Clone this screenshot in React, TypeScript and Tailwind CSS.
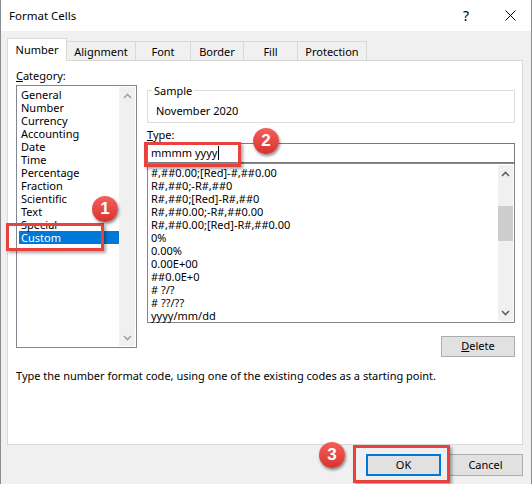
import React from 'react';

const categories = [
  'General',
  'Number',
  'Currency',
  'Accounting',
  'Date',
  'Time',
  'Percentage',
  'Fraction',
  'Scientific',
  'Text',
  'Special',
  'Custom',
];

const formats = [
  '#,##0.00;[Red]-#,##0.00',
  'R#,##0;-R#,##0',
  'R#,##0;[Red]-R#,##0',
  'R#,##0.00;-R#,##0.00',
  'R#,##0.00;[Red]-R#,##0.00',
  '0%',
  '0.00%',
  '0.00E+00',
  '##0.0E+0',
  '# ?/?',
  '# ??/??',
  'yyyy/mm/dd',
];

const tabs = [
  { label: 'Alignment', w: 'w-[69px]' },
  { label: 'Font', w: 'w-[55px]' },
  { label: 'Border', w: 'w-[53px]' },
  { label: 'Fill', w: 'w-[54px]' },
  { label: 'Protection', w: 'w-[69px]' },
];

function Chevron({ up, color }: { up?: boolean; color: string }) {
  return (
    <svg width="9" height="6" viewBox="0 0 9 6">
      <polyline
        points={up ? '1,5 4.5,1.5 8,5' : '1,1 4.5,4.5 8,1'}
        fill="none"
        stroke={color}
        strokeWidth="1.6"
      />
    </svg>
  );
}

function Badge({ n, pos }: { n: string; pos: string }) {
  return (
    <div
      className={`absolute ${pos} flex h-[26px] w-[26px] items-center justify-center rounded-full bg-gradient-to-b from-[#f3605b] to-[#d8302d] text-[17px] font-bold text-white shadow-[1px_2px_3px_rgba(0,0,0,0.45)] font-['Liberation_Sans',Arial,sans-serif]`}
    >
      {n}
    </div>
  );
}

export default function App() {
  return (
    <div className="relative h-[484px] w-[532px] overflow-hidden border-x border-[#8c8c8c] bg-[#f0f0f0] text-[11px] text-black font-['Noto_Sans',sans-serif]">
      {/* Title bar */}
      <div className="flex h-[31px] items-center bg-white pl-[8px] text-[11.5px]">
        <span className="flex-1">Format Cells</span>
        <span className="w-[14px] text-center text-[14px]">?</span>
        <svg className="ml-[32px] mr-[15px]" width="11" height="11" viewBox="0 0 11 11">
          <path d="M0.5 0.5 L10.5 10.5 M10.5 0.5 L0.5 10.5" stroke="#000" strokeWidth="1" />
        </svg>
      </div>

      <div className="pl-[6px] pt-[7px]">
        {/* Tabs */}
        <div className="flex h-[22px] items-end">
          <div className="relative z-10 -mb-px h-[23px] w-[60px] border-x border-t border-[#d9d9d9] bg-white pt-[3px] text-center">
            Number
          </div>
          {tabs.map((t) => (
            <div
              key={t.label}
              className={`h-[19px] ${t.w} border-r border-t border-[#d9d9d9] pt-[2px] text-center leading-[16px]`}
            >
              {t.label}
            </div>
          ))}
        </div>

        {/* Panel */}
        <div className="h-[385px] w-[516px] border border-[#d9d9d9] bg-white pl-[8px] pt-[7px]">
          <div className="flex gap-[10px]">
            {/* Category */}
            <div className="w-[121px]">
              <div className="h-[17px] leading-[16px]">
                <span className="underline">C</span>ategory:
              </div>
              <div className="flex h-[263px] border border-[#828790] p-px">
                <div className="flex-1 pl-px pt-[1px]">
                  {categories.map((c) => (
                    <div
                      key={c}
                      className={`h-[13px] pl-[2px] leading-[13px] ${
                        c === 'Custom' ? 'bg-[#0078d7] text-white' : ''
                      }`}
                    >
                      {c}
                    </div>
                  ))}
                </div>
                <div className="flex w-[16px] flex-col items-center justify-between bg-[#f0f0f0] pb-[5px] pt-[6px]">
                  <Chevron up color="#a3a3a3" />
                  <Chevron color="#a3a3a3" />
                </div>
              </div>
            </div>

            {/* Right side */}
            <div className="flex w-[368px] flex-col">
              <div className="relative mt-[22px] h-[33px] border border-[#dcdcdc] pl-[8px] pt-[13px] leading-[14px]">
                <span className="absolute left-[4px] top-[-7px] bg-white px-[2px] leading-[14px]">
                  Sample
                </span>
                November 2020
              </div>
              <div className="mt-[5px] leading-[14px]">
                <span className="underline">T</span>ype:
              </div>
              <div className="mt-[1px] flex h-[20px] items-center border border-[#7a7a7a] pl-[3px]">
                mmmm yyyy
                <span className="ml-px h-[14px] w-px bg-black" />
              </div>
              <div className="flex h-[160px] border border-[#828790] p-px">
                <div className="flex-1 pl-[2px] pt-[1px]">
                  {formats.map((f) => (
                    <div key={f} className="h-[13px] leading-[13px]">
                      {f}
                    </div>
                  ))}
                </div>
                <div className="flex w-[15px] flex-col items-center bg-[#f0f0f0] pb-[5px] pt-[6px]">
                  <Chevron up color="#606060" />
                  <div className="mt-[29px] h-[35px] w-full bg-[#cdcdcd]" />
                  <div className="flex-1" />
                  <Chevron color="#606060" />
                </div>
              </div>
              <button className="mt-[13px] h-[21px] w-[74px] self-end border border-[#adadad] bg-[#e1e1e1]">
                <span className="underline">D</span>elete
              </button>
            </div>
          </div>
          <p className="mt-[12px] leading-[14px]">
            Type the number format code, using one of the existing codes as a starting point.
          </p>
        </div>

        {/* Dialog buttons */}
        <div className="mt-[9px] flex justify-end gap-[7px] pr-[8px]">
          <button className="h-[22px] w-[75px] border-2 border-[#0078d7] bg-[#e1e1e1]">OK</button>
          <button className="h-[22px] w-[75px] border border-[#adadad] bg-[#e1e1e1]">Cancel</button>
        </div>
      </div>

      {/* Annotations */}
      <div className="absolute left-[5px] top-[223px] h-[28px] w-[98px] border-[3px] border-[#e8423f] shadow-[2px_2px_3px_rgba(0,0,0,0.35)]" />
      <div className="absolute left-[143px] top-[142px] h-[25px] w-[97px] border-[3px] border-[#e8423f] shadow-[2px_2px_3px_rgba(0,0,0,0.35)]" />
      <div className="absolute left-[352px] top-[445px] h-[38px] w-[97px] border-[3px] border-[#e8423f] shadow-[2px_2px_3px_rgba(0,0,0,0.35)]" />
      <Badge n="1" pos="left-[91px] top-[196px]" />
      <Badge n="2" pos="left-[252px] top-[128px]" />
      <Badge n="3" pos="left-[318px] top-[442px]" />
    </div>
  );
}
